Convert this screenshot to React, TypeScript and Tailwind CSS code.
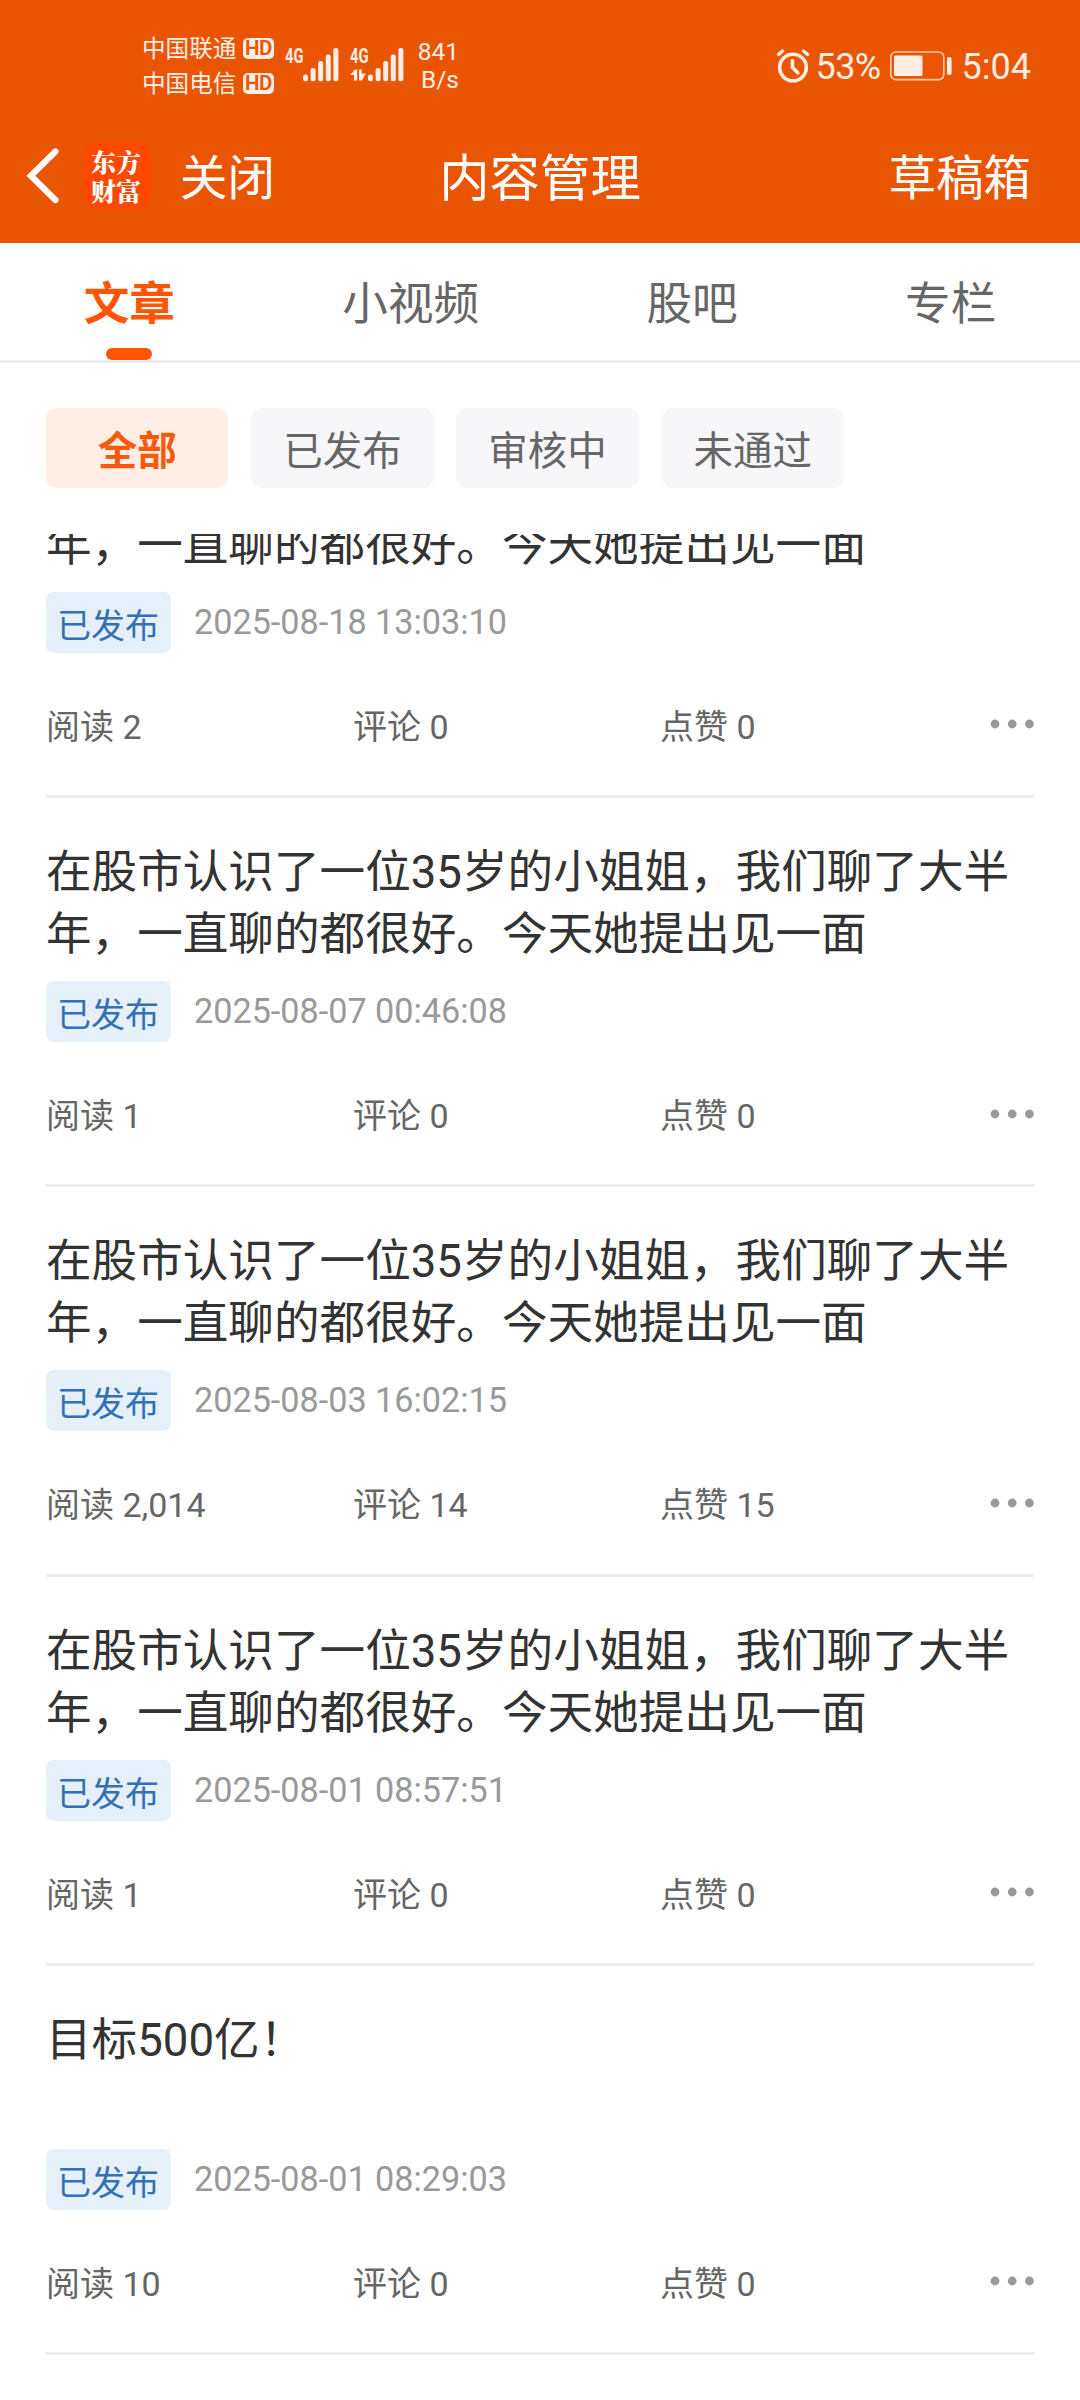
import React from "react";

interface Article {
  title: string;
  time: string;
  reads: string;
  comments: string;
  likes: string;
}

const LONG_TITLE =
  "在股市认识了一位35岁的小姐姐，我们聊了大半年，一直聊的都很好。今天她提出见一面";

const articles: Article[] = [
  { title: LONG_TITLE, time: "2025-08-07 00:46:08", reads: "1", comments: "0", likes: "0" },
  { title: LONG_TITLE, time: "2025-08-03 16:02:15", reads: "2,014", comments: "14", likes: "15" },
  { title: LONG_TITLE, time: "2025-08-01 08:57:51", reads: "1", comments: "0", likes: "0" },
  { title: "目标500亿！", time: "2025-08-01 08:29:03", reads: "10", comments: "0", likes: "0" },
];

// first row of the list, only its last title line is still in view
const scrolledArticle: Article = {
  title: "年，一直聊的都很好。今天她提出见一面",
  time: "2025-08-18 13:03:10",
  reads: "2",
  comments: "0",
  likes: "0",
};

const tabs = ["文章", "小视频", "股吧", "专栏"];
const filters = ["全部", "已发布", "审核中", "未通过"];

const Carrier: React.FC<{ name: string }> = ({ name }) => (
  <div className="flex h-[35px] items-start">
    <span className="w-[101px] text-[23.6px] leading-[35px]">{name}</span>
    <span className="mt-[6px] flex h-[21px] w-[31px] items-center justify-center rounded-[5px] bg-[#feeee4] text-[20.5px] font-semibold leading-[21px] tracking-[-0.5px] text-[#ea5504]">
      HD
    </span>
  </div>
);

const Signal: React.FC<{ arrows?: boolean }> = ({ arrows }) => (
  <svg width="54" height="44" viewBox="0 -10 54 44" fill="#feeee4">
    <text
      x="0"
      y="15"
      fontSize="20.5"
      fontWeight="700"
      fontFamily="Roboto, sans-serif"
      textLength="18.5"
      lengthAdjust="spacingAndGlyphs"
    >
      4G
    </text>
    {arrows && <path d="M0 27 5 21.5H7.2V32.5H4V27ZM9 21.5H11.8V25.5H16L11.8 32.5H9Z" />}
    <rect x="18" y="26.5" width="5" height="6.8" rx="2.2" />
    <rect x="25.6" y="20" width="5" height="13.3" rx="2.2" />
    <rect x="33.2" y="13" width="5" height="20.3" rx="2.2" />
    <rect x="40.8" y="6.5" width="5" height="26.8" rx="2.2" />
    <rect x="48.4" y="0" width="5" height="33.3" rx="2.2" />
  </svg>
);

const StatusBar: React.FC = () => (
  <div className="flex h-[130px] items-start justify-between pl-[142px] pr-[48px] text-[#feeee4]">
    <div className="flex">
      <div className="w-[143px] pt-[32px]">
        <Carrier name="中国联通" />
        <Carrier name="中国电信" />
      </div>
      <div className="flex gap-[11px] pt-[38px]">
        <Signal />
        <Signal arrows />
      </div>
      <div className="ml-[13px] w-[42px] pt-[38px] text-right text-[24.5px] leading-[28px]">
        <div>841</div>
        <div>B/s</div>
      </div>
    </div>
    <div className="mt-[46px] flex h-[42px] items-center text-[36px] leading-[42px]">
      <svg width="34" height="34" viewBox="0 0 34 34" fill="none" stroke="#feeee4" strokeLinecap="round" className="mb-[2px]">
        <circle cx="17" cy="18.5" r="13.3" strokeWidth="3.6" />
        <path d="M16.5 11.5V18.5L22 24" strokeWidth="3.6" />
        <path d="M2.5 5.5 6.5 2M31.5 5.5 27.5 2" strokeWidth="3.4" />
      </svg>
      <span className="ml-[6px] w-[74px] tracking-[-0.6px]">53%</span>
      <svg width="63" height="30" viewBox="0 0 63 30" fill="#feeee4" className="mb-[2px]">
        <rect x="0.8" y="1" width="53" height="27.6" rx="5" fill="none" stroke="#fbc9a6" strokeWidth="1.6" />
        <rect x="4" y="4.5" width="28.5" height="20.6" rx="1.5" />
        <rect x="57" y="6" width="4.6" height="18" rx="2" />
      </svg>
      <span className="ml-[9px] mr-px">5:04</span>
    </div>
  </div>
);

const NavBar: React.FC = () => (
  <div className="grid h-[113px] grid-cols-3 items-start px-[26px] text-white">
    <div className="flex h-[92px] items-center">
      <svg width="34" height="58" viewBox="0 0 34 58" fill="none" stroke="#fff" strokeWidth="6.2" strokeLinecap="round">
        <path d="M29.5 4.5 4.8 28.8 29.5 53" strokeLinejoin="miter" />
      </svg>
      <div className="ml-[23px] flex h-[68px] w-[68px] flex-col items-center justify-center rounded-[15px] bg-[#ff4800] pr-[2px] font-['Noto_Serif_CJK_SC','Noto_Sans_CJK_SC',sans-serif] text-[25px] font-black leading-[29px]">
        <span>东方</span>
        <span>财富</span>
      </div>
      <span className="ml-[29px] pt-[5px] text-[47.4px] leading-[60px]">关闭</span>
    </div>
    <div className="flex h-[92px] items-center justify-center pt-[5px] text-[50.4px] leading-[60px]">
      内容管理
    </div>
    <div className="flex h-[92px] items-center justify-end pr-[23px] pt-[5px] text-[47.4px] leading-[60px]">
      草稿箱
    </div>
  </div>
);

const ArticleItem: React.FC<{ article: Article; titleHeight?: string }> = ({
  article,
  titleHeight = "h-[124px]",
}) => (
  <div className="border-b-[3px] border-[#ededed] pb-[44.25px] pt-[44px]">
    <div className={`text-[45.6px] leading-[62px] text-[#333] ${titleHeight}`}>
      {article.title}
    </div>
    <div className="mt-[15px] flex h-[61px]">
      <span className="flex h-[61px] w-[125px] items-center justify-center rounded-[8px] bg-[#e5f0fa] pr-px pt-[7px] text-[34px] leading-[50px] text-[#3270b8]">
        已发布
      </span>
      <span className="ml-[23px] text-[34.2px] leading-[60px] text-[#999]">
        {article.time}
      </span>
    </div>
    <div className="mt-[48px] flex h-[50px] items-center text-[34px] leading-[50px] text-[#666]">
      <span className="w-[307px] pt-[2px]">阅读 {article.reads}</span>
      <span className="w-[307px] pt-[2px]">评论 {article.comments}</span>
      <span className="flex-1 pt-[2px]">点赞 {article.likes}</span>
      <svg width="44" height="10" viewBox="0 0 44 10" fill="#999" className="mb-[3px]">
        <circle cx="5" cy="5" r="4.4" />
        <circle cx="22.2" cy="5" r="4.4" />
        <circle cx="39.4" cy="5" r="4.4" />
      </svg>
    </div>
  </div>
);

const App: React.FC = () => {
  return (
    <div
      lang="zh-CN"
      className="flex h-[2400px] w-[1080px] flex-col overflow-hidden bg-white font-[Roboto,'Noto_Sans_CJK_SC',sans-serif]"
    >
      {/* HEADER */}
      <header className="bg-[#ea5504]">
        <StatusBar />
        <NavBar />
      </header>

      {/* TABS */}
      <nav className="flex h-[120px] shrink-0 justify-around border-b-[3px] border-[#ededed]">
        {tabs.map((tab, i) => (
          <div
            key={tab}
            className={`flex flex-col items-center justify-between text-[45.6px] ${
              i === 0 ? "font-bold text-[#ff5500]" : "text-[#666]"
            }`}
          >
            <span className="pt-[32px] leading-[60px]">{tab}</span>
            {i === 0 && <span className="h-[12px] w-[46px] rounded-[6px] bg-[#ff5500]" />}
          </div>
        ))}
      </nav>

      {/* FILTERS */}
      <div className="flex h-[171px] shrink-0 gap-[22.8px] px-[46px] pt-[45px]">
        {filters.map((filter, i) => (
          <button
            key={filter}
            className={`flex h-[80px] w-[182.4px] items-center justify-center rounded-[11px] pt-[7px] text-[39.5px] leading-[60px] ${
              i === 0 ? "bg-[#ffeee6] font-bold text-[#f75a0c]" : "bg-[#f7f7fa] text-[#666]"
            }`}
          >
            {filter}
          </button>
        ))}
      </div>

      {/* ARTICLE LIST */}
      <main className="flex-1 overflow-hidden px-[46px]">
        <div className="-mt-[63.25px]">
          <ArticleItem article={scrolledArticle} titleHeight="h-[62px]" />
          {articles.map((article) => (
            <ArticleItem key={article.time} article={article} />
          ))}
        </div>
      </main>
    </div>
  );
};

export default App;
